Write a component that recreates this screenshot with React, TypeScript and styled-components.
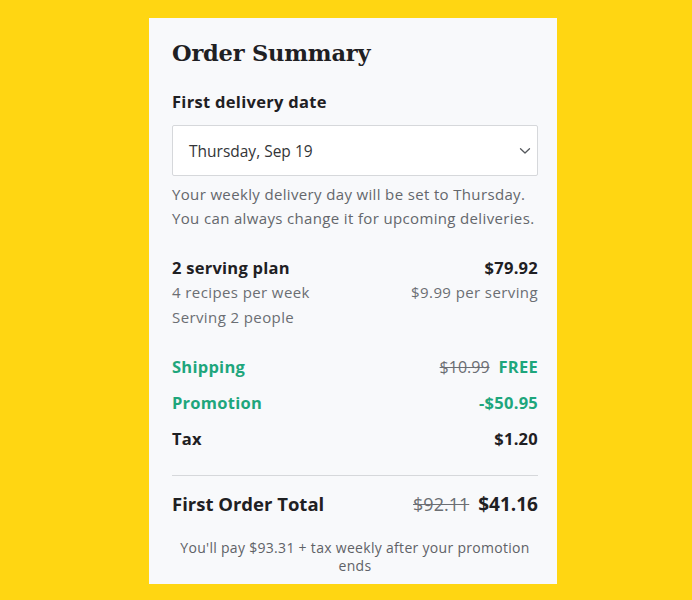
import React from "react";
import styled, { createGlobalStyle } from "styled-components";

const GlobalStyle = createGlobalStyle`
  html, body {
    margin: 0;
    background: #ffd612;
  }
  body {
    font-family: "Open Sans", "Noto Sans", "Liberation Sans", sans-serif;
    color: #1f2023;
  }
`;

const Page = styled.div`
  min-height: 600px;
  padding: 18px 0 0 149px;
  box-sizing: border-box;
`;

const Card = styled.div`
  width: 408px;
  min-height: 566px;
  box-sizing: border-box;
  background: #f8f9fb;
  padding: 19px 19px 8px 23px;
`;

const Title = styled.h1`
  margin: 0;
  font-family: "DejaVu Serif", "Liberation Serif", serif;
  font-weight: 700;
  font-size: 22.5px;
  line-height: 32px;
  letter-spacing: -0.2px;
  color: #1f2023;
`;

const Label = styled.div`
  margin-top: 21px;
  font-size: 16.5px;
  font-weight: 700;
  line-height: 24px;
  letter-spacing: 0.3px;
`;

const Select = styled.div`
  margin-top: 11px;
  height: 51px;
  box-sizing: border-box;
  background: #fff;
  border: 1px solid #d6d8db;
  border-radius: 2px;
  display: flex;
  align-items: center;
  justify-content: space-between;
  padding: 0 6px 0 16px;
  font-size: 15.5px;
  color: #333538;
`;

const Helper = styled.p`
  margin: 6px 0 0;
  font-size: 15px;
  line-height: 24px;
  letter-spacing: 0.35px;
  color: #64676c;
`;

const Row = styled.div<{ $gap?: number; $tone?: "dark" | "green" }>`
  display: flex;
  justify-content: space-between;
  align-items: center;
  margin-top: ${(p) => p.$gap ?? 0}px;
  font-size: 16.5px;
  font-weight: 700;
  line-height: 24px;
  letter-spacing: 0.25px;
  color: ${(p) => (p.$tone === "green" ? "#1ea67c" : "#1f2023")};
`;

const SubRow = styled.div`
  display: flex;
  justify-content: space-between;
  font-size: 15px;
  line-height: 25px;
  letter-spacing: 0.4px;
  color: #6b6e73;
`;

const Plan = styled.div`
  margin-top: 26px;
`;

const Value = styled.span`
  display: flex;
  align-items: center;
  gap: 9px;
`;

const Strike = styled.span<{ $size?: number }>`
  font-weight: 400;
  font-size: ${(p) => p.$size ?? 16}px;
  letter-spacing: 0;
  color: #6b6e73;
  text-decoration: line-through;
`;

const Divider = styled.hr`
  margin: 24px 0 0;
  border: 0;
  border-top: 1px solid #d6d8db;
`;

const Total = styled.div`
  display: flex;
  justify-content: space-between;
  align-items: center;
  margin-top: 14px;
  line-height: 28px;
  font-weight: 700;
  font-size: 18.5px;
`;

const TotalValue = styled.span`
  font-size: 19px;
`;

const Footer = styled.p`
  margin: 21px 0 0;
  text-align: center;
  font-size: 14px;
  line-height: 18px;
  letter-spacing: 0.3px;
  color: #5f6267;
  padding: 0 8px;
`;

const Chevron = () => (
  <svg width="12" height="8" viewBox="0 0 12 8" fill="none">
    <path d="M1.5 1.8 6 6 10.5 1.8" stroke="#55585d" strokeWidth="1.3" strokeLinecap="round" strokeLinejoin="round" />
  </svg>
);

const App: React.FC = () => {
  return (
    <Page>
      <GlobalStyle />
      <Card>
        <Title>Order Summary</Title>
        <Label>First delivery date</Label>
        <Select>
          <span>Thursday, Sep 19</span>
          <Chevron />
        </Select>
        <Helper>
          Your weekly delivery day will be set to Thursday.
          <br />
          You can always change it for upcoming deliveries.
        </Helper>

        <Plan>
          <Row>
            <span>2 serving plan</span>
            <span>$79.92</span>
          </Row>
          <SubRow>
            <span>4 recipes per week</span>
            <span>$9.99 per serving</span>
          </SubRow>
          <SubRow>
            <span>Serving 2 people</span>
          </SubRow>
        </Plan>

        <Row $gap={25} $tone="green">
          <span>Shipping</span>
          <Value>
            <Strike>$10.99</Strike>
            FREE
          </Value>
        </Row>
        <Row $gap={12} $tone="green">
          <span>Promotion</span>
          <span>-$50.95</span>
        </Row>
        <Row $gap={12}>
          <span>Tax</span>
          <span>$1.20</span>
        </Row>

        <Divider />

        <Total>
          <span>First Order Total</span>
          <Value>
            <Strike $size={18}>$92.11</Strike>
            <TotalValue>$41.16</TotalValue>
          </Value>
        </Total>

        <Footer>You'll pay $93.31 + tax weekly after your promotion ends</Footer>
      </Card>
    </Page>
  );
};

export default App;
